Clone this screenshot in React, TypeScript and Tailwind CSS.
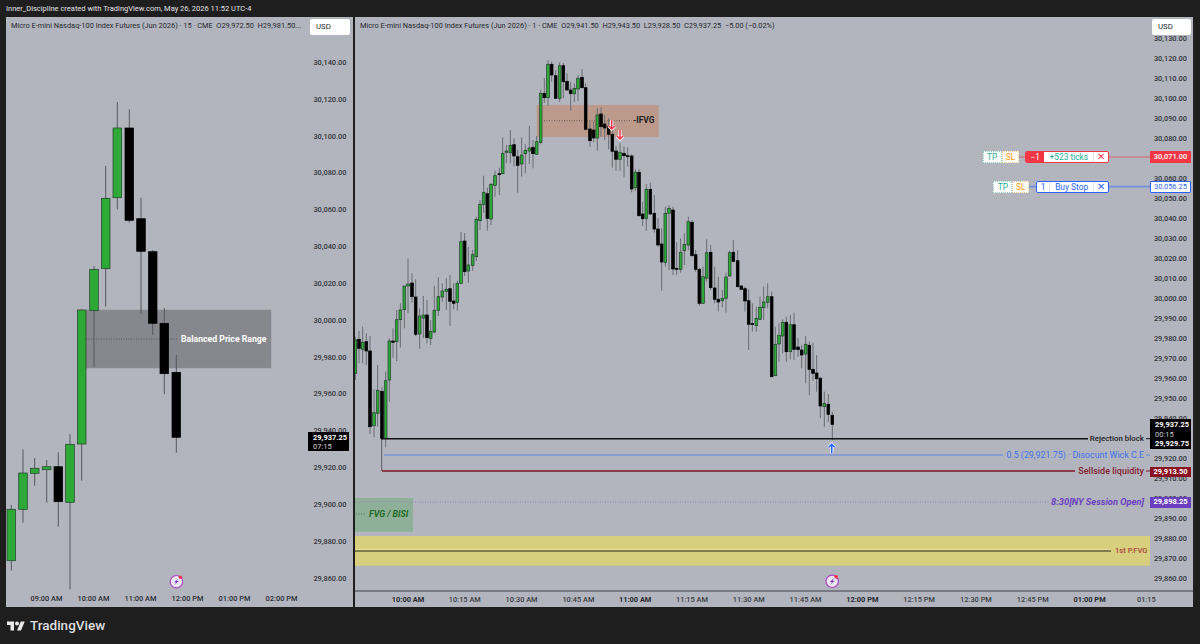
type Candle = [number, number, number, number, number, number];

// x, wick top, body top, body bottom, wick bottom, green
const leftCandles: Candle[] = [
  [11.3, 505, 509.3, 560.7, 570.7, 1],
  [23, 449.3, 473, 509.3, 522.7, 1],
  [34.7, 458, 468.3, 473.3, 485.7, 1],
  [46.7, 460, 466.7, 469.7, 502.7, 1],
  [58.3, 452.3, 466.7, 501.7, 526.7, 0],
  [70, 434, 444.3, 502.3, 589.3, 1],
  [81.7, 309, 310, 444, 480.7, 1],
  [94, 266, 269.3, 310.7, 367.3, 1],
  [105.7, 166, 198.3, 268.7, 306.7, 1],
  [117.3, 102, 128, 197.7, 209.3, 1],
  [129.3, 109.3, 128, 220.3, 222.7, 0],
  [141, 197.7, 218.7, 251.3, 314, 0],
  [152.7, 250, 251.7, 323.3, 335, 0],
  [164.3, 308, 323.3, 373.7, 394, 0],
  [176.3, 355, 372.3, 437.3, 452.7, 0],
];

const rawRight: Candle[] = [
  [4, 336.7, 340, 373.3, 380, 1], [15, 331, 339.3, 348.3, 363.3, 0], [26, 326.7, 342.3, 349.3, 363.3, 1],
  [37, 333.3, 341.7, 351, 365, 0], [48, 336, 351, 426.7, 434, 0], [60, 389.3, 412.7, 425.7, 437.3, 1],
  [71, 365, 390.3, 413.3, 426.7, 1], [84, 386.7, 391.3, 438.3, 440, 0], [95, 371.7, 380.7, 438.3, 447.3, 1],
  [106, 338.3, 341, 380, 401.7, 1], [117, 328.3, 341, 342.3, 357.7, 0], [128, 310, 319.7, 341.7, 361, 1],
  [139, 303.3, 310, 319.7, 347.7, 1], [151, 286, 286, 309.7, 328.3, 1], [162, 258.3, 284, 286, 313.3, 1],
  [174, 273.3, 283, 296.7, 302.7, 0], [185, 279.3, 297, 334.3, 336, 0], [197, 308.3, 316, 334, 348.7, 1],
  [208, 296, 315, 318, 338.3, 1], [219, 300, 315, 337.7, 343.3, 0], [230, 320, 331.3, 338.3, 345, 1],
  [241, 285.7, 310.3, 332, 333.3, 1], [253, 277.3, 296.7, 310.3, 316, 1], [265, 283.3, 291, 297, 301.7, 1],
  [277, 278.3, 289.3, 291.3, 310, 1], [288, 275, 288.7, 301.3, 326, 0], [299, 283.3, 301, 303.3, 309.3, 0],
  [310, 280.7, 283.3, 302.3, 310.7, 1], [321, 232, 241.7, 283.3, 284, 1], [332, 233, 241, 271.7, 276, 0],
  [343, 247, 265, 271, 282.7, 1], [356, 250, 254.7, 265.3, 270.7, 1], [367, 216.7, 219.3, 256.7, 261, 1],
  [378, 200, 204.3, 220.7, 230, 1], [389, 175.7, 192.3, 204.3, 213, 1], [400, 187.7, 193.7, 218.3, 230.7, 0],
  [411, 183, 184.3, 219, 225, 1], [423, 170.7, 175.7, 185.3, 196.7, 1], [436, 167.7, 173.7, 174.7, 195, 0],
  [446, 137.3, 153.3, 173.7, 174, 1], [457, 145, 151, 152.3, 163.3, 1], [469, 130, 145.3, 152.7, 163.3, 1],
  [480, 138.3, 144.7, 156, 166.7, 0], [491, 150, 156.7, 165.3, 192.7, 0], [503, 137.3, 155, 164, 176.7, 1],
  [514, 144.3, 150.3, 153.7, 173.3, 1], [526, 126, 148, 151, 164, 1], [537, 140, 147.3, 153.7, 168.3, 0],
  [548, 136, 141.7, 154.3, 155, 1], [560, 90, 93.3, 142.3, 144.3, 1], [571, 78.3, 93.3, 97.7, 103, 0],
  [582, 60, 64.3, 97.7, 106, 1], [593, 61.7, 64.3, 75, 81.7, 0], [605, 70, 75.7, 98.3, 99, 0],
  [617, 62.3, 65.7, 98.3, 101.7, 1], [628, 63, 65.7, 81.7, 98.3, 0], [639, 73.3, 81.3, 90, 90.7, 0],
  [650, 81.7, 90, 93.7, 110.7, 0], [661, 83.3, 88.3, 93.7, 102.3, 1], [672, 75, 78.3, 89, 101, 1],
  [684, 69, 77.3, 87.7, 88.3, 0], [695, 83.3, 87.7, 129.3, 130, 0], [708, 121.7, 129, 140.7, 146.7, 0],
  [719, 121.7, 130, 138, 142.3, 0], [730, 108.3, 115, 138, 150.7, 1], [741, 107.3, 114, 126.7, 136.7, 0],
  [752, 115, 124, 128, 140, 0], [764, 118.3, 126.7, 134.3, 149.3, 0], [775, 130, 134.3, 151.3, 167.7, 0],
  [786, 146, 151, 159.3, 171, 0], [798, 143.3, 152.3, 159.3, 171, 1], [810, 146.7, 153.3, 155.7, 177.3, 0],
  [821, 147.3, 155.7, 156.3, 166.7, 0], [833, 154.3, 156, 189, 192.3, 0], [844, 169.3, 172.3, 187.7, 191, 1],
  [855, 169.3, 172.3, 215.7, 216.7, 0], [866, 201.7, 214, 218.7, 226, 0], [877, 184, 189.3, 218.3, 230.7, 1],
  [889, 182.7, 189.3, 214, 214.7, 0], [901, 195, 213.3, 229, 232.7, 0], [912, 218.3, 229, 245, 246.7, 0],
  [923, 228, 244, 262, 290.7, 0], [934, 206.7, 213.3, 262.3, 266.7, 1], [945, 205, 208.3, 213.3, 270, 1],
  [957, 206.7, 210, 269, 275, 0], [968, 242.3, 268.3, 269, 275, 0], [980, 238.3, 252.3, 269.3, 272.7, 1],
  [991, 233.3, 244.3, 250.7, 265, 1], [1003, 216.7, 221.7, 245, 250, 1], [1014, 220, 222.3, 255.7, 256.7, 0],
  [1025, 250, 254.7, 269.3, 271.7, 0], [1036, 268.3, 269.3, 303.3, 305.7, 0], [1047, 266.7, 276.7, 303.3, 304, 1],
  [1058, 239.3, 252.7, 278.3, 281.7, 1], [1070, 245, 252.3, 287.7, 290, 0], [1082, 266.7, 288, 299.3, 303.3, 0],
  [1093, 276.7, 299.3, 302, 311.3, 0], [1105, 290, 298.3, 300.7, 307.3, 1], [1116, 272.7, 277, 298.3, 312.7, 1],
  [1127, 250.7, 252.7, 276, 276.7, 1], [1138, 240, 252.3, 261.3, 262.3, 0], [1151, 250, 260.7, 286.7, 287.3, 0],
  [1162, 285, 286, 289.3, 290, 0], [1173, 286.7, 288.7, 301, 311.7, 0], [1184, 289.3, 300.7, 324.3, 350, 0],
  [1195, 303.3, 323.6, 324.3, 331.7, 0], [1207, 306.7, 318.3, 325.7, 331.7, 1], [1218, 296.7, 307.3, 319.3, 320, 1],
  [1229, 286.7, 302, 307.7, 320, 1], [1241, 283.3, 296.7, 302.3, 308.3, 1], [1253, 291.7, 296.7, 376.7, 377.3, 0],
  [1264, 326.7, 344.3, 375.7, 376, 1], [1275, 323.3, 335.3, 344, 361.7, 1], [1286, 319.3, 322.3, 336, 353.3, 1],
  [1297, 316.7, 322.3, 351.7, 361.7, 0], [1309, 315, 324.7, 351.7, 359.3, 1], [1320, 312.7, 324.7, 349.3, 360, 0],
  [1332, 338, 347, 349.7, 356.7, 0], [1343, 345, 350, 355, 368.3, 0], [1355, 336, 344.3, 354, 383.3, 1],
  [1366, 341.7, 345.3, 369.3, 395, 0], [1377, 342.7, 369.3, 373.3, 380.7, 0], [1388, 355, 373, 378.7, 391.7, 0],
  [1399, 376.7, 378.3, 406, 418.3, 0], [1411, 391.7, 403.3, 406.7, 426.7, 1], [1423, 394, 404.3, 414.3, 421.7, 0],
  [1435, 411.7, 415.3, 424.3, 440, 0],
];
const rightCandles: Candle[] = rawRight.map(([x, a, b, c, d, g]) => [354 + x / 3, a, b, c, d, g]);

const leftPrices = ['30,140.00', '30,120.00', '30,100.00', '30,080.00', '30,060.00', '30,040.00', '30,020.00', '30,000.00', '29,980.00', '29,960.00', '29,940.00', '29,920.00', '29,900.00', '29,880.00', '29,860.00'];
// empty rows sit fully behind a price tag
const rightPrices = ['30,130.00', '30,120.00', '30,110.00', '30,100.00', '30,090.00', '30,080.00', '', '30,060.00', '30,050.00', '30,040.00', '30,030.00', '30,020.00', '30,010.00', '30,000.00', '29,990.00', '29,980.00', '29,970.00', '29,960.00', '29,950.00', '29,940.00', '', '29,920.00', '29,910.00', '29,900.00', '29,890.00', '29,880.00', '29,870.00', '29,860.00'];
const leftTimes = ['09:00 AM', '10:00 AM', '11:00 AM', '12:00 PM', '01:00 PM', '02:00 PM'];
const rightTimes: [string, boolean][] = [['10:00 AM', true], ['10:15 AM', false], ['10:30 AM', false], ['10:45 AM', false], ['11:00 AM', true], ['11:15 AM', false], ['11:30 AM', false], ['11:45 AM', false], ['12:00 PM', true], ['12:15 PM', false], ['12:30 PM', false], ['12:45 PM', false], ['01:00 PM', true], ['01:15', false]];

function Candles({ data, width, wick }: { data: Candle[]; width: number; wick: string }) {
  return (
    <>
      {data.map(([x, wt, bt, bb, wb, g]) => (
        <g key={x}>
          <line x1={x} x2={x} y1={wt} y2={wb} stroke={wick} strokeWidth={1} />
          <rect
            x={x - width / 2}
            y={bt}
            width={width}
            height={Math.max(bb - bt, 1)}
            fill={g ? '#2ea836' : '#000000'}
            stroke={g ? '#20402a' : '#000000'}
            strokeWidth={0.7}
          />
        </g>
      ))}
    </>
  );
}

function Bolt({ cx, cy }: { cx: number; cy: number }) {
  return (
    <g>
      <circle cx={cx} cy={cy} r={6.2} fill="#ece6f0" stroke="#ad45c4" strokeWidth={1.2} />
      <path d={`M${cx + 2} ${cy - 3.2}L${cx - 2.4} ${cy + 0.6}H${cx - 0.2}L${cx - 2} ${cy + 3.4}L${cx + 2.4} ${cy - 0.6}H${cx + 0.2}Z`} fill="#7b2fc4" />
      <circle cx={cx + 4} cy={cy - 4.4} r={1.8} fill="#f23645" />
    </g>
  );
}

function Arrow({ x, y, color, up }: { x: number; y: number; color: string; up?: boolean }) {
  const d = up
    ? `M${x} ${y + 5}V${y - 4}M${x - 3} ${y - 1}L${x} ${y - 4}L${x + 3} ${y - 1}`
    : `M${x} ${y - 5}V${y + 4}M${x - 3} ${y + 1}L${x} ${y + 4}L${x + 3} ${y + 1}`;
  return (
    <g fill="none">
      <path d={d} stroke="#f1f2f5" strokeWidth={3.2} />
      <path d={d} stroke={color} strokeWidth={1.5} />
    </g>
  );
}

function LeftPanel() {
  return (
    <div className="relative w-[347px] h-[590px] bg-[#b2b5be] overflow-hidden">
      <svg className="absolute inset-0 w-full h-full" viewBox="6 17 347 590">
        <rect x={86} y={310} width={185} height={58} fill="#87888d" stroke="#8f8d99" strokeWidth={0.6} />
        <line x1={86} x2={177} y1={339} y2={339} stroke="#55565a" strokeWidth={1} strokeDasharray="1 1.5" />
        <Candles data={leftCandles} width={8.6} wick="#55585f" />
        <Bolt cx={176.4} cy={581.7} />
      </svg>

      <div className="relative flex flex-col h-full">
        <div className="flex flex-1 min-h-0">
          <div className="flex-1 min-w-0 pl-[5px] pt-[3px]">
            <div className="text-[7.4px] leading-[12px] text-[#26282e] whitespace-nowrap">
              Micro E-mini Nasdaq-100 Index Futures (Jun 2026) · 15 · CME&nbsp;&nbsp;O29,972.50&nbsp;&nbsp;H29,981.50...
            </div>
          </div>
          <div className="w-[44px] pt-[27px] pr-[6.5px] flex flex-col items-end">
            {leftPrices.map((p) => (
              <div key={p} className="h-[36.85px] shrink-0 flex items-center text-[7.4px] font-medium text-[#33353b]">{p}</div>
            ))}
          </div>
        </div>
        <div className="h-[16px] shrink-0 pl-[17px] flex items-center">
          {leftTimes.map((t) => (
            <div key={t} className="w-[47px] shrink-0 text-center text-[7.4px] font-medium text-[#2a2c32]">{t}</div>
          ))}
        </div>
      </div>

      <div className="absolute left-[304px] top-[2px] w-[40px] h-[16px] bg-white rounded-[2px] flex items-center pl-[6px] text-[7.8px] text-[#26282e]">USD</div>
      <div className="absolute left-[175px] top-[316px] text-[8.7px] leading-[12px] font-bold text-white whitespace-nowrap">Balanced Price Range</div>
      <div className="absolute left-[302px] top-[415px] w-[41px] h-[19px] bg-black pl-[5px] text-[7.5px] leading-[9px] pt-[1px]">
        <div className="font-bold text-white">29,937.25</div>
        <div className="text-[#d0d2d8]">07:15</div>
      </div>
    </div>
  );
}

function RightPanel() {
  return (
    <div className="relative w-[838px] h-[590px] bg-[#b2b5be] overflow-hidden">
      <svg className="absolute inset-0 w-full h-full" viewBox="355 17 838 590">
        <rect x={536.7} y={105} width={122} height={32} fill="#bb9a8c" />
        <line x1={544} x2={632} y1={120.7} y2={120.7} stroke="#6c5a52" strokeWidth={1} strokeDasharray="1 1.5" />
        <rect x={355} y={498} width={58} height={33.7} fill="#8fb098" />
        <line x1={356} x2={366} y1={514} y2={514} stroke="#3b7a44" strokeWidth={1} strokeDasharray="1 1.5" />
        <rect x={355} y={536} width={795} height={29.7} fill="#d8cf7e" />
        <line x1={355} x2={1111} y1={549.6} y2={549.6} stroke="#ebe5ae" strokeWidth={0.8} />
        <line x1={355} x2={1111} y1={551} y2={551} stroke="#7d7a4c" strokeWidth={1.8} />
        <line x1={355} x2={1050} y1={502} y2={502} stroke="#8a80b4" strokeWidth={1} strokeDasharray="1 1.5" />
        <line x1={381.7} x2={381.7} y1={438} y2={471} stroke="#5b5e65" strokeWidth={1} />
        <line x1={384} x2={1003} y1={455} y2={455} stroke="#5f86e0" strokeWidth={1.2} />
        <line x1={382} x2={1075} y1={471} y2={471} stroke="#7d1525" strokeWidth={1.3} />
        <Candles data={rightCandles} width={2.7} wick="#696c73" />
        <line x1={381} x2={1088} y1={438.7} y2={438.7} stroke="#111214" strokeWidth={1.6} />
        <line x1={1146} x2={1150} y1={438.7} y2={438.7} stroke="#111214" strokeWidth={1} />
        <line x1={1146} x2={1150} y1={455} y2={455} stroke="#5f86e0" strokeWidth={1} />
        <line x1={1146} x2={1150} y1={471} y2={471} stroke="#7d1525" strokeWidth={1} />
        <line x1={1019} x2={1150} y1={157} y2={157} stroke="#d2626f" strokeWidth={1} />
        <line x1={1029} x2={1150} y1={186.6} y2={186.6} stroke="#6f8ed8" strokeWidth={1.8} />
        <Arrow x={611.7} y={125} color="#f23645" />
        <Arrow x={620} y={135} color="#f23645" />
        <Arrow x={831.7} y={448.3} color="#2962ff" up />
        <Bolt cx={832.2} cy={581.3} />
      </svg>

      <div className="relative flex flex-col h-full">
        <div className="flex flex-1 min-h-0">
          <div className="flex-1 min-w-0 pl-[5px] pt-[3px]">
            <div className="text-[7.4px] leading-[12px] text-[#26282e] whitespace-nowrap">
              Micro E-mini Nasdaq-100 Index Futures (Jun 2026) · 1 · CME&nbsp;&nbsp;O29,941.50&nbsp;&nbsp;H29,943.50&nbsp;&nbsp;L29,928.50&nbsp;&nbsp;C29,937.25&nbsp;&nbsp;−5.00 (−0.02%)
            </div>
          </div>
          <div className="w-[44px] pt-[12px] pr-[6px] flex flex-col items-end">
            {rightPrices.map((p, i) => (
              <div key={i} className="h-[20px] shrink-0 flex items-center text-[7.4px] font-medium text-[#33353b]">{p}</div>
            ))}
          </div>
        </div>
        <div className="h-[17px] shrink-0 border-t-2 border-[#787b86] pl-[24.6px] flex items-center">
          {rightTimes.map(([t, bold]) => (
            <div key={t} className={bold ? 'w-[56.8px] shrink-0 text-center text-[7.4px] font-bold text-[#26282e]' : 'w-[56.8px] shrink-0 text-center text-[7.4px] font-medium text-[#3a3c42]'}>{t}</div>
          ))}
        </div>
      </div>

      <div className="absolute left-[797px] top-[2px] w-[39px] h-[16px] bg-white rounded-[2px] flex items-center pl-[6px] text-[7.8px] text-[#26282e]">USD</div>

      <div className="absolute left-[278px] top-[97px] text-[8.4px] leading-[12px] font-bold text-[#1d1d1f]">-IFVG</div>
      <div className="absolute left-[14px] top-[491px] text-[8.8px] leading-[12px] italic font-bold text-[#1b6b1f] whitespace-nowrap">FVG / BISI</div>

      <div className="absolute right-[49px] top-[416px] text-[7.9px] leading-[12px] font-medium text-[#1d1d1f] whitespace-nowrap">Rejection block</div>
      <div className="absolute right-[49px] top-[432px] text-[8.85px] leading-[12px] text-[#3f73ea] whitespace-nowrap">0.5 (29,921.75) · Disocunt Wick C.E</div>
      <div className="absolute right-[49px] top-[448px] text-[9px] leading-[12px] font-medium text-[#85202e] whitespace-nowrap">Sellside liquidity</div>
      <div className="absolute right-[49px] top-[479px] text-[9.3px] leading-[12px] italic font-bold text-[#6a3fc0] whitespace-nowrap">8:30[NY Session Open]</div>
      <div className="absolute left-[760px] top-[528px] text-[7.6px] leading-[12px] font-medium text-[#a8483a] whitespace-nowrap">1st P.FVG</div>

      <div className="absolute left-[627.7px] top-[134px] h-[11.5px] flex text-[8.4px] leading-[10px]">
        <div className="w-[19px] bg-white border border-dotted border-[#8fcfc4] text-[#22ab94] text-center">TP</div>
        <div className="w-[17.5px] bg-white border border-dotted border-[#f5c98a] text-[#ff9800] text-center">SL</div>
        <div className="w-[6px]" />
        <div className="w-[84.3px] flex bg-white border border-[#f23645] rounded-[2px] overflow-hidden">
          <div className="w-[18px] bg-[#f23645] text-white text-center">−1</div>
          <div className="flex-1 text-[#22ab94] text-center">+523 ticks</div>
          <div className="w-[15px] border-l border-[#e3e4e8] text-[#f23645] text-center text-[9.5px]">✕</div>
        </div>
      </div>
      <div className="absolute left-[638.3px] top-[163.7px] h-[12px] flex text-[8.4px] leading-[10px]">
        <div className="w-[19px] bg-white border border-dotted border-[#8fcfc4] text-[#22ab94] text-center">TP</div>
        <div className="w-[17px] bg-white border border-dotted border-[#f5c98a] text-[#ff9800] text-center">SL</div>
        <div className="w-[6.7px]" />
        <div className="w-[73.3px] flex bg-white border border-[#2962ff] rounded-[2px] overflow-hidden text-[#2962ff]">
          <div className="w-[13px] border-r border-[#e3e4e8] text-center">1</div>
          <div className="flex-1 text-center">Buy Stop</div>
          <div className="w-[15px] border-l border-[#e3e4e8] text-center text-[9.5px]">✕</div>
        </div>
      </div>

      <div className="absolute left-[795px] top-[134px] w-[41px] h-[11.5px] bg-[#f23645] text-white text-[7.5px] leading-[11.5px] font-medium text-center">30,071.00</div>
      <div className="absolute left-[795px] top-[163.7px] w-[41px] h-[12px] bg-white border border-[#2962ff] text-[#2962ff] text-[7.5px] leading-[10px] text-center rounded-[1px]">30,056.25</div>
      <div className="absolute left-[795px] top-[402px] w-[41px] h-[29.7px] bg-black pl-[5px] pt-[1px] text-[7.5px] leading-[9.7px]">
        <div className="font-bold text-white">29,937.25</div>
        <div className="text-[#c9cbd1]">00:15</div>
        <div className="font-bold text-white">29,929.75</div>
      </div>
      <div className="absolute left-[795px] top-[449.7px] w-[41px] h-[10.5px] bg-[#8b1220] text-white text-[7.5px] leading-[10.5px] font-bold text-center">29,913.50</div>
      <div className="absolute left-[795px] top-[480px] w-[41px] h-[10.5px] bg-[#6a3fc0] text-white text-[7.5px] leading-[10.5px] font-bold text-center">29,898.25</div>
    </div>
  );
}

export default function App() {
  return (
    <div className="w-[1200px] h-[644px] bg-[#1e1e1e] flex flex-col overflow-hidden font-['Roboto',sans-serif]">
      <div className="h-[17px] shrink-0 pl-[6px] flex items-center text-[7.5px] text-[#e2e3e6] whitespace-nowrap">
        Inner_Discipline created with TradingView.com, May 26, 2026 11:52 UTC-4
      </div>
      <div className="h-[590px] shrink-0 flex gap-[2px] pl-[6px]">
        <LeftPanel />
        <RightPanel />
      </div>
      <div className="flex-1 flex items-center gap-[5px] pl-[7px]">
        <svg className="w-[18px] h-[10px]" viewBox="0 4 36 18" fill="#e8e8e8">
          <path d="M14 22H7V11H0V4h14v18zM28 22h-8l7.5-18h8L28 22z" />
          <circle cx="20" cy="8" r="4" />
        </svg>
        <span className="text-[13.5px] text-[#dedede] font-medium">TradingView</span>
      </div>
    </div>
  );
}
